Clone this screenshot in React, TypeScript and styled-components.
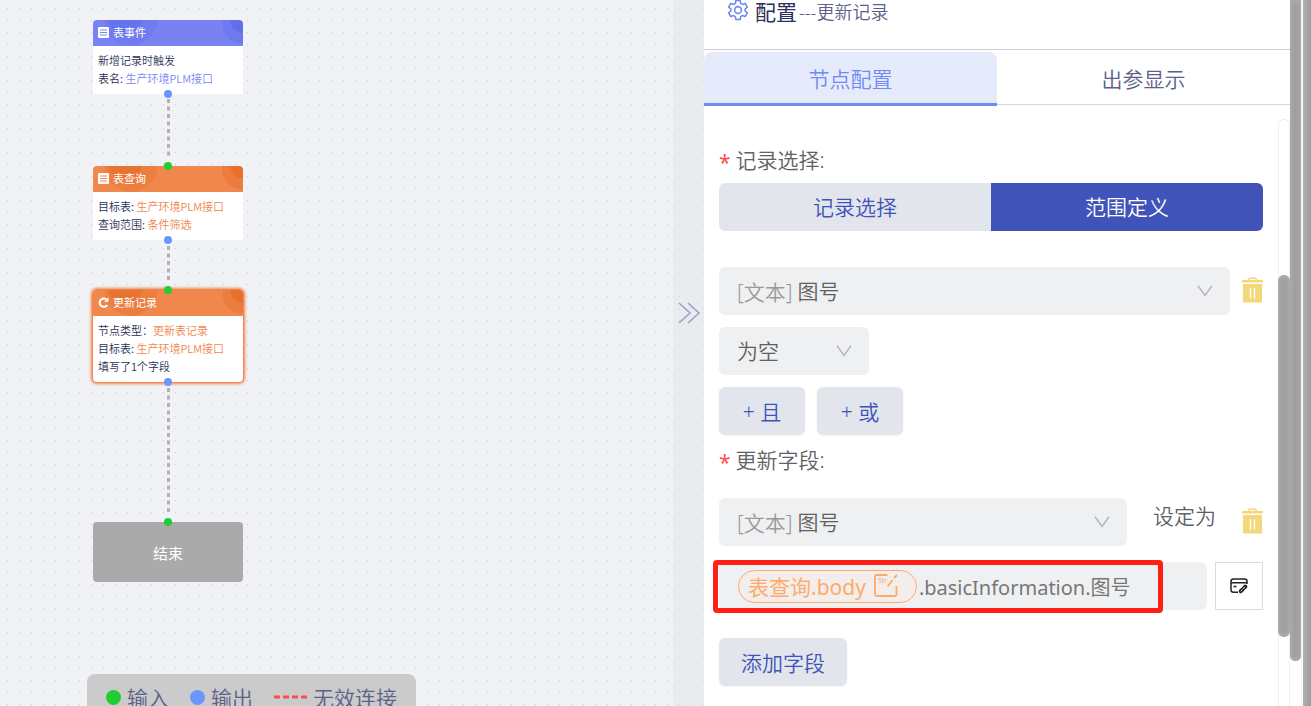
import React, { useState } from "react";
import styled, { createGlobalStyle } from "styled-components";

const Global = createGlobalStyle`
  *, *::before, *::after { box-sizing: border-box; }
  body {
    margin: 0;
    background: #fff;
    font-family: "Noto Sans", "Noto Sans CJK SC", sans-serif;
    font-weight: 350;
    color: #606266;
  }
  button, input, select { font: inherit; color: inherit; border: 0; margin: 0; }
`;

const Shell = styled.div`
  display: flex;
  height: 100vh;
  overflow: hidden;
`;

/* ---------- flow canvas ---------- */

const Canvas = styled.main`
  position: relative;
  flex: 1;
  min-width: 0;
  overflow: hidden;
  background-color: #f0f2f6;
  background-image: radial-gradient(circle at 0 0, #c9cbd0 1px, transparent 1px);
  background-size: 12px 12px;
  background-position: 7px 8px;
`;

const Edges = styled.svg`
  position: absolute;
  inset: 0;
  width: 100%;
  height: 100%;
`;

const Node = styled.article<{ $top: number; $accent: string; $selected?: boolean }>`
  position: absolute;
  left: 93px;
  top: ${(p) => p.$top}px;
  width: 150px;
  background: #fff;
  border-radius: 4px 4px 0 0;
  font-family: "Noto Sans CJK SC", sans-serif;
  font-size: 11px;
  line-height: 18px;
  color: #2b3158;
  ${(p) =>
    p.$selected &&
    `border-radius: 4px; box-shadow: 0 0 0 1px ${p.$accent}, 0 0 3px 2px ${p.$accent};`}
`;

const NodeHead = styled.header<{ $accent: string; $deep: string }>`
  display: flex;
  align-items: center;
  gap: 4px;
  height: 26px;
  padding: 0 5px 2px;
  border-radius: 4px 4px 0 0;
  background:
    radial-gradient(circle at 149px 1px, ${(p) => p.$deep} 11px, transparent 12px),
    radial-gradient(circle at 149px 4px, ${(p) => p.$deep}77 19px, transparent 20px),
    radial-gradient(circle at 32px -4px, ${(p) => p.$deep}bb 17px, transparent 18px),
    radial-gradient(circle at 38px -1px, ${(p) => p.$deep}66 26px, transparent 27px),
    ${(p) => p.$accent};
  color: #fff;
  font-weight: 400;
`;

const NodeBody = styled.div`
  padding: 5px 5px 7px;
  white-space: nowrap;
`;

const NodeValue = styled.span<{ $color: string }>`
  color: ${(p) => p.$color};
`;

const Port = styled.i<{ $out?: boolean }>`
  position: absolute;
  left: 50%;
  ${(p) => (p.$out ? "bottom: -4px;" : "top: -4px;")}
  width: 8px;
  height: 8px;
  margin-left: -4px;
  border-radius: 50%;
  background: ${(p) => (p.$out ? "#6b96ff" : "#22cc33")};
`;

const EndNode = styled.article`
  position: absolute;
  left: 93px;
  top: 522px;
  width: 150px;
  height: 60px;
  display: grid;
  place-items: center;
  border-radius: 4px;
  background: #aaa;
  color: #fff;
  font-size: 15px;
  font-weight: 400;
`;

const Legend = styled.div`
  position: absolute;
  left: 87px;
  bottom: -14px;
  display: flex;
  align-items: center;
  gap: 21px;
  height: 46px;
  padding: 0 19px;
  border-radius: 8px;
  background: rgba(187, 187, 187, 0.7);
  color: #5b6187;
  font-size: 21px;
  white-space: nowrap;
`;

const LegendItem = styled.span`
  display: flex;
  align-items: center;
  gap: 6px;
`;

const Dot = styled.i<{ $color: string }>`
  width: 15px;
  height: 15px;
  border-radius: 50%;
  background: ${(p) => p.$color};
`;

const Collapse = styled.button`
  position: absolute;
  top: 0;
  right: 0;
  width: 31px;
  height: 100%;
  padding: 0 0 80px;
  display: flex;
  align-items: center;
  justify-content: center;
  background: rgba(222, 223, 226, 0.35);
`;

/* ---------- settings panel ---------- */

const Drawer = styled.aside`
  flex: 0 0 607px;
  min-width: 0;
  display: flex;
  background: #fff;
`;

const Panel = styled.section`
  flex: 1;
  min-width: 0;
  display: flex;
  flex-direction: column;
`;

const PanelHead = styled.header`
  display: flex;
  align-items: center;
  height: 50px;
  padding: 0 23px 28px;
  border-bottom: 1px solid #cdced6;
  color: #5b6187;
  font-size: 18px;
  white-space: nowrap;
`;

const PanelTitle = styled.h1`
  margin: 0 2px 0 6px;
  font-size: 21px;
  font-weight: 400;
  color: #2b3158;
`;

const Tabs = styled.div`
  display: flex;
  height: 56px;
  padding-top: 2px;
`;

const Tab = styled.button<{ $active?: boolean }>`
  flex: 1;
  padding: 0;
  font-size: 21px;
  background: ${(p) => (p.$active ? "#e6ebfc" : "#fff")};
  color: ${(p) => (p.$active ? "#7189f2" : "#5b6187")};
  border-radius: ${(p) => (p.$active ? "8px 8px 0 0" : "0")};
  border-bottom: ${(p) => (p.$active ? "3px solid #7189f2" : "1px solid #d4d5dd")};
  margin-bottom: ${(p) => (p.$active ? "0" : "1px")};
`;

const ScrollArea = styled.div`
  flex: 1;
  display: flex;
  min-height: 0;
  padding-top: 13px;
`;

const Form = styled.form`
  flex: 1;
  min-width: 0;
  padding: 25px 15px 0;
  font-size: 21px;
`;

const Label = styled.div<{ $space: number }>`
  display: flex;
  align-items: center;
  gap: 5px;
  height: 30px;
  margin-bottom: ${(p) => p.$space}px;
`;

const Required = styled.span`
  padding-top: 6px;
  color: #ff4d4f;
  font-weight: 400;
`;

const Segmented = styled.div`
  display: flex;
  margin-bottom: 36px;
  border-radius: 6px;
  overflow: hidden;
`;

const Segment = styled.button<{ $active?: boolean }>`
  flex: 1;
  height: 48px;
  padding: 0 0 2px;
  background: ${(p) => (p.$active ? "#4053b9" : "#e2e5ec")};
  color: ${(p) => (p.$active ? "#fff" : "#4053b9")};
`;

const Row = styled.div<{ $gap?: number; $space?: number }>`
  display: flex;
  align-items: center;
  gap: ${(p) => p.$gap ?? 12}px;
  margin-bottom: ${(p) => p.$space ?? 12}px;
`;

const SelectBox = styled.label<{ $width?: number }>`
  flex: ${(p) => (p.$width ? `0 0 ${p.$width}px` : "1")};
  min-width: 0;
  display: flex;
  align-items: center;
  gap: 5px;
  height: 48px;
  padding: 0 17px 1px 18px;
  border-radius: 6px;
  background: #eff0f2;
  color: #999;
`;

const Select = styled.select`
  flex: 1;
  min-width: 0;
  height: 100%;
  padding: 0;
  appearance: none;
  background: transparent;
  color: #606060;
`;

const IconButton = styled.button`
  display: grid;
  place-items: center;
  padding: 0 0 3px;
  width: 21px;
  height: 29px;
  background: transparent;
`;

const SoftButton = styled.button`
  height: 48px;
  min-width: 86px;
  padding: 0 22px;
  border-radius: 6px;
  background: #e2e5ec;
  color: #4053b9;
  box-shadow: 0 1px 3px rgba(0, 0, 0, 0.05);
`;

const SetTo = styled.span`
  padding: 0 14px 15px;
`;

const ValueField = styled.div`
  position: relative;
  flex: 1;
  min-width: 0;
  display: flex;
  align-items: center;
  gap: 2px;
  height: 48px;
  padding: 0 19px;
  border-radius: 6px;
  background: #eff0f2;
  font-weight: 400;
`;

const Chip = styled.span`
  display: flex;
  align-items: center;
  gap: 8px;
  height: 33px;
  padding: 0 18px 0 9px;
  border: 1px solid #ffaa6b;
  border-radius: 17px;
  background: #f3eeeb;
  color: #ffaa6b;
  white-space: nowrap;
`;

const ValueInput = styled.input`
  flex: 1;
  min-width: 0;
  padding: 0;
  background: transparent;
  color: #777;
  font-size: 20px;
`;

const Highlight = styled.div`
  position: absolute;
  inset: -2px 44px -3px -6px;
  border: 5px solid #ff1f14;
  border-radius: 4px;
  pointer-events: none;
`;

const FormulaButton = styled.button`
  display: grid;
  place-items: center;
  width: 48px;
  height: 48px;
  padding: 0;
  border: 1px solid #dcdcdc;
  background: #fff;
`;

/* ---------- scroll tracks ---------- */

const Track = styled.div<{ $from?: number; $rounded?: boolean }>`
  width: 12px;
  padding-top: ${(p) => p.$from ?? 0}px;
  border: solid #eee;
  border-width: ${(p) => (p.$rounded ? "1px 1px 0" : "0 1px 0 0")};
  border-radius: ${(p) => (p.$rounded ? "6px 6px 0 0" : "0")};
`;

const Thumb = styled.div<{ $size: string; $capped?: boolean }>`
  height: ${(p) => p.$size};
  margin: ${(p) => (p.$capped ? "0 -1px" : "0")};
  border-radius: ${(p) => (p.$capped ? "6px" : "0 0 6px 6px")};
  background: #a0a0a0;
  box-shadow: inset 0 0 4px 1px #b0b0b0;
`;

const PageBar = styled.div`
  width: 9px;
  border-left: 1px solid #fff;
  background: linear-gradient(90deg, #b0b0b0, #9c9c9c);
`;

/* ---------- icons ---------- */

const ListIcon = ({ line }: { line: string }) => (
  <svg width="11" height="11" viewBox="0 0 11 11" aria-hidden="true">
    <rect width="11" height="11" rx="1" fill="#fff" />
    <path d="M2 3h7M2 5.500h7M2 8h7" stroke={line} />
  </svg>
);

const RefreshIcon = () => (
  <svg width="11" height="11" viewBox="0 0 11 11" fill="none" aria-hidden="true">
    <path d="M9.300 8A4.200 4.200 0 1 1 8.400 2.300" stroke="#fff" strokeWidth="2" />
    <path d="M10.500 0.300v4.400H6.100z" fill="#fff" />
  </svg>
);

const GearSvg = styled.svg`
  margin-bottom: 2px;
`;

const GearIcon = () => (
  <GearSvg width="22" height="22" viewBox="0 0 22 22" fill="none" stroke="#7189f2" strokeWidth="1.6" strokeLinejoin="round" aria-hidden="true">
    <path d="M8.900 1.500h4.200l.6 2.900 1.700 1 2.800-1 2.100 3.700-2.200 1.900v2l2.200 1.900-2.100 3.700-2.800-1-1.700 1-.6 2.900H8.900l-.6-2.900-1.700-1-2.800 1-2.100-3.700L3.900 12v-2L1.700 8.100l2.100-3.700 2.800 1 1.700-1z" />
    <circle cx="11" cy="11" r="3.400" />
  </GearSvg>
);

const Chevron = () => (
  <svg width="16" height="12" viewBox="0 0 16 12" fill="none" stroke="#b5b6b8" strokeWidth="1.500" aria-hidden="true">
    <path d="M1 .8l7 9.700 7-9.700" />
  </svg>
);

const TrashIcon = () => (
  <svg width="21" height="26" viewBox="0 0 21 26" aria-hidden="true">
    <path d="M6 3.500L7.500 1.200h6L15 3.500" fill="none" stroke="#f3d778" strokeWidth="1.500" />
    <path d="M0 3h21v2.500H0z" fill="#f3d778" />
    <path d="M1 7h19v18.500H1z" fill="#f3d778" />
    <path d="M8.500 11v10.500M12.500 11v10.500" stroke="#fff" strokeWidth="1.300" />
  </svg>
);

const StrIcon = () => (
  <svg width="24" height="24" viewBox="0 0 24 24" fill="none" stroke="#ffaa6b" aria-hidden="true">
    <path d="M13.500 1H2.500Q1 1 1 2.500v18Q1 22 2.500 22h18.500q1.500 0 1.500-1.500V12" strokeWidth="1.800" />
    <path d="M13.500 12.500l5-6.500M20 4l3-3" strokeWidth="1.900" />
    <text x="4" y="9" fontSize="7" fontWeight="400" fill="#ffaa6b" stroke="none">Str</text>
  </svg>
);

const EditCardIcon = () => (
  <svg width="18" height="16" viewBox="0 0 18 16" fill="none" stroke="#222" strokeWidth="1.500" aria-hidden="true">
    <path d="M8 14.200H3.500Q1 14.200 1 11.700V3.500Q1 1 3.500 1h11Q17 1 17 3.500V6M1 4.800h16M3.500 8.500h3" />
    <path d="M10.800 13.200l1.800-1.900M14 10l1.300-1.400" strokeWidth="4" strokeLinecap="round" />
    <path d="M10.700 13.300l4.600-4.800" stroke="#fff" strokeWidth="1" strokeDasharray="2.500 1" />
  </svg>
);

const BLUE = "#7882f2";
const ORANGE = "#f0874d";

type FlowNode = {
  top: number;
  title: string;
  accent: string;
  deep: string;
  value: string;
  icon: React.ReactNode;
  input?: boolean;
  selected?: boolean;
  lines: [string, string?][];
};

const nodes: FlowNode[] = [
  {
    top: 20, title: "表事件", accent: BLUE, deep: "#6170ea", value: "#8088f5", icon: <ListIcon line={BLUE} />,
    lines: [["新增记录时触发"], ["表名: ", "生产环境PLM接口"]],
  },
  {
    top: 166, title: "表查询", accent: ORANGE, deep: "#e6702c", value: ORANGE, icon: <ListIcon line={ORANGE} />, input: true,
    lines: [["目标表: ", "生产环境PLM接口"], ["查询范围: ", "条件筛选"]],
  },
  {
    top: 290, title: "更新记录", accent: ORANGE, deep: "#e6702c", value: ORANGE, icon: <RefreshIcon />, input: true, selected: true,
    lines: [["节点类型：", "更新表记录"], ["目标表: ", "生产环境PLM接口"], ["填写了1个字段"]],
  },
];

export default function App() {
  const [tab, setTab] = useState(0);
  const [mode, setMode] = useState(1);
  const [value, setValue] = useState(".basicInformation.图号");

  return (
    <Shell>
      <Global />
      <Canvas>
        <Edges aria-hidden="true">
          <path d="M168.500 99V157M168.500 246V283M168.500 388V513" stroke="#b1b1b7" strokeWidth="3" strokeDasharray="4 3.500" />
        </Edges>
        {nodes.map((n) => (
          <Node key={n.title} $top={n.top} $accent={n.accent} $selected={n.selected}>
            <NodeHead $accent={n.accent} $deep={n.deep}>
              {n.icon}
              {n.title}
            </NodeHead>
            <NodeBody>
              {n.lines.map(([label, text]) => (
                <div key={label}>
                  {label}
                  {text && <NodeValue $color={n.value}>{text}</NodeValue>}
                </div>
              ))}
            </NodeBody>
            {n.input && <Port />}
            <Port $out />
          </Node>
        ))}
        <EndNode>
          结束
          <Port />
        </EndNode>
        <Legend>
          <LegendItem><Dot $color="#22cc33" />输入</LegendItem>
          <LegendItem><Dot $color="#6b96ff" />输出</LegendItem>
          <LegendItem>
            <svg width="33" height="4" aria-hidden="true">
              <path d="M0 2h33" stroke="#ff4d4f" strokeWidth="3" strokeDasharray="6 3" />
            </svg>
            无效连接
          </LegendItem>
        </Legend>
        <Collapse aria-label="收起">
          <svg width="24" height="22" viewBox="0 0 24 22" fill="none" stroke="#98a2cc" strokeWidth="1.600" aria-hidden="true">
            <path d="M2 1l11 10L2 21M11 1l11 10-11 10" />
          </svg>
        </Collapse>
      </Canvas>

      <Drawer>
        <Panel>
          <PanelHead>
            <GearIcon />
            <PanelTitle>配置</PanelTitle>
            ---更新记录
          </PanelHead>
          <Tabs role="tablist">
            {["节点配置", "出参显示"].map((name, i) => (
              <Tab key={name} role="tab" aria-selected={tab === i} $active={tab === i} onClick={() => setTab(i)}>
                {name}
              </Tab>
            ))}
          </Tabs>
          <ScrollArea>
            <Form onSubmit={(e) => e.preventDefault()}>
              <Label $space={9}><Required>*</Required>记录选择:</Label>
              <Segmented>
                {["记录选择", "范围定义"].map((name, i) => (
                  <Segment key={name} type="button" aria-pressed={mode === i} $active={mode === i} onClick={() => setMode(i)}>
                    {name}
                  </Segment>
                ))}
              </Segmented>
              <Row>
                <SelectBox>
                  [文本]
                  <Select><option>图号</option></Select>
                  <Chevron />
                </SelectBox>
                <IconButton type="button" aria-label="删除条件"><TrashIcon /></IconButton>
              </Row>
              <Row>
                <SelectBox $width={150}>
                  <Select aria-label="条件"><option>为空</option></Select>
                  <Chevron />
                </SelectBox>
              </Row>
              <Row $space={9}>
                <SoftButton type="button">+ 且</SoftButton>
                <SoftButton type="button">+ 或</SoftButton>
              </Row>
              <Label $space={24}><Required>*</Required>更新字段:</Label>
              <Row $space={16}>
                <SelectBox>
                  [文本]
                  <Select><option>图号</option></Select>
                  <Chevron />
                </SelectBox>
                <SetTo>设定为</SetTo>
                <IconButton type="button" aria-label="删除字段"><TrashIcon /></IconButton>
              </Row>
              <Row $gap={8} $space={28}>
                <ValueField>
                  <Chip>表查询.body<StrIcon /></Chip>
                  <ValueInput aria-label="字段值" value={value} onChange={(e) => setValue(e.target.value)} />
                  <Highlight />
                </ValueField>
                <FormulaButton type="button" aria-label="编辑公式"><EditCardIcon /></FormulaButton>
              </Row>
              <SoftButton type="button">添加字段</SoftButton>
            </Form>
            <Track $rounded $from={155}><Thumb $size="362px" $capped /></Track>
          </ScrollArea>
        </Panel>
        <Track><Thumb $size="661px" /></Track>
        <PageBar />
      </Drawer>
    </Shell>
  );
}
